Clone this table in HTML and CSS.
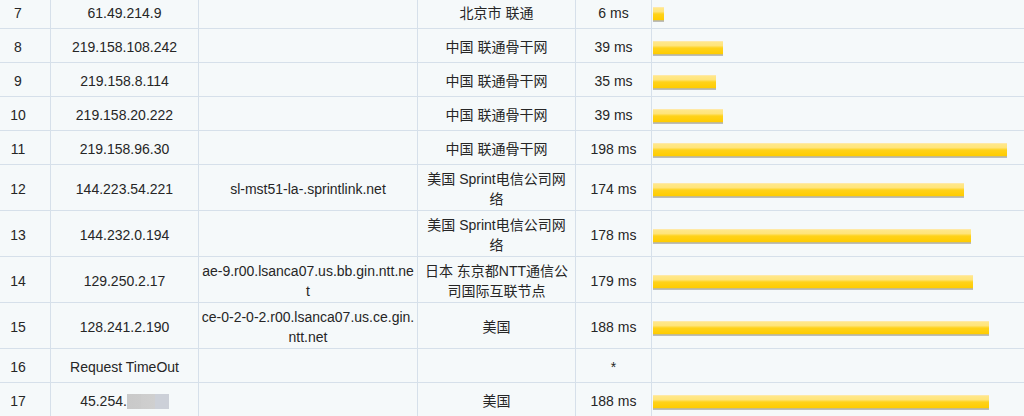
FILE: index.html
```html
<!DOCTYPE html>
<html lang="zh-CN">
<head>
  <meta charset="UTF-8">
  <title>Traceroute</title>
  <link rel="stylesheet" href="styles.css">
</head>
<body>
  <table class="trace">
    <colgroup>
      <col class="c-hop">
      <col class="c-ip">
      <col class="c-host">
      <col class="c-geo">
      <col class="c-time">
      <col class="c-bar">
    </colgroup>
    <tbody>
      <tr>
        <td class="hop">7</td><td>61.49.214.9</td><td class="host"></td><td class="geo">北京市 联通</td><td>6 ms</td>
        <td class="graph"><div class="bar" style="width: 11px"></div></td>
      </tr>
      <tr>
        <td class="hop">8</td><td>219.158.108.242</td><td class="host"></td><td class="geo">中国 联通骨干网</td><td>39 ms</td>
        <td class="graph"><div class="bar" style="width: 70px"></div></td>
      </tr>
      <tr>
        <td class="hop">9</td><td>219.158.8.114</td><td class="host"></td><td class="geo">中国 联通骨干网</td><td>35 ms</td>
        <td class="graph"><div class="bar" style="width: 63px"></div></td>
      </tr>
      <tr>
        <td class="hop">10</td><td>219.158.20.222</td><td class="host"></td><td class="geo">中国 联通骨干网</td><td>39 ms</td>
        <td class="graph"><div class="bar" style="width: 70px"></div></td>
      </tr>
      <tr>
        <td class="hop">11</td><td>219.158.96.30</td><td class="host"></td><td class="geo">中国 联通骨干网</td><td>198 ms</td>
        <td class="graph"><div class="bar" style="width: 354px"></div></td>
      </tr>
      <tr>
        <td class="hop">12</td><td>144.223.54.221</td><td class="host">sl-mst51-la-.sprintlink.net</td><td class="geo">美国 Sprint电信公司网络</td><td>174 ms</td>
        <td class="graph"><div class="bar" style="width: 311px"></div></td>
      </tr>
      <tr>
        <td class="hop">13</td><td>144.232.0.194</td><td class="host"></td><td class="geo">美国 Sprint电信公司网络</td><td>178 ms</td>
        <td class="graph"><div class="bar" style="width: 318px"></div></td>
      </tr>
      <tr>
        <td class="hop">14</td><td>129.250.2.17</td><td class="host">ae-9.r00.lsanca07.us.bb.gin.ntt.ne<br>t</td><td class="geo">日本 东京都NTT通信公司国际互联节点</td><td>179 ms</td>
        <td class="graph"><div class="bar" style="width: 320px"></div></td>
      </tr>
      <tr>
        <td class="hop">15</td><td>128.241.2.190</td><td class="host">ce-0-2-0-2.r00.lsanca07.us.ce.gin.<br>ntt.net</td><td class="geo">美国</td><td>188 ms</td>
        <td class="graph"><div class="bar" style="width: 336px"></div></td>
      </tr>
      <tr>
        <td class="hop">16</td><td>Request TimeOut</td><td class="host"></td><td class="geo"></td><td>*</td>
        <td class="graph"></td>
      </tr>
      <tr>
        <td class="hop">17</td><td>45.254.<span class="masked"></span></td><td class="host"></td><td class="geo">美国</td><td>188 ms</td>
        <td class="graph"><div class="bar" style="width: 336px"></div></td>
      </tr>
    </tbody>
  </table>
</body>
</html>
```

FILE: styles.css
```css
body {
  margin: 0;
  background: #f5f9fa;
  font-family: "Liberation Sans", "Noto Sans CJK SC", sans-serif;
  font-size: 14px;
  color: #262626;
  overflow: hidden;
}
.trace {
  width: 1024px;
  margin-top: -5px;
  table-layout: fixed;
  border-collapse: separate;
  border-spacing: 0;
}
.c-hop { width: 51px; }
.c-ip { width: 148px; }
.c-host { width: 219px; }
.c-geo { width: 158px; }
.c-time { width: 76px; }
.c-bar { width: 372px; }
.trace tr {
  height: 34px;
}
.trace td {
  padding: 4px 4px 1px;
  line-height: 20px;
  text-align: center;
  vertical-align: middle;
  border-bottom: 1px solid #d6e0ea;
  border-right: 1px solid #d6e0ea;
  word-wrap: break-word;
}
.trace td.hop {
  padding-left: 0;
  padding-right: 14px;
}
.trace td.host {
  padding: 4px 2px 1px;
  white-space: nowrap;
}
.trace td.graph {
  border-right: none;
  text-align: left;
  padding: 3px 0 0 1px;
}
.bar {
  height: 12px;
  background: linear-gradient(#ffe88a 0, #ffe47a 30%, #ffd21a 50%, #ffcc00 100%);
  border-top: 1px solid #ffe9a6;
  box-shadow: 0 1px 0 #c4bb8a, 0 2px 0 #bdbdb8;
}
.masked {
  display: inline-block;
  width: 42px;
  height: 15px;
  vertical-align: -3px;
  background: linear-gradient(90deg, #c9c9c9 0, #cbcbcb 33%, #cdcdcd 34%, #cfcfcf 66%, #ccd0d8 67%, #ccd0d8 100%);
}
```
